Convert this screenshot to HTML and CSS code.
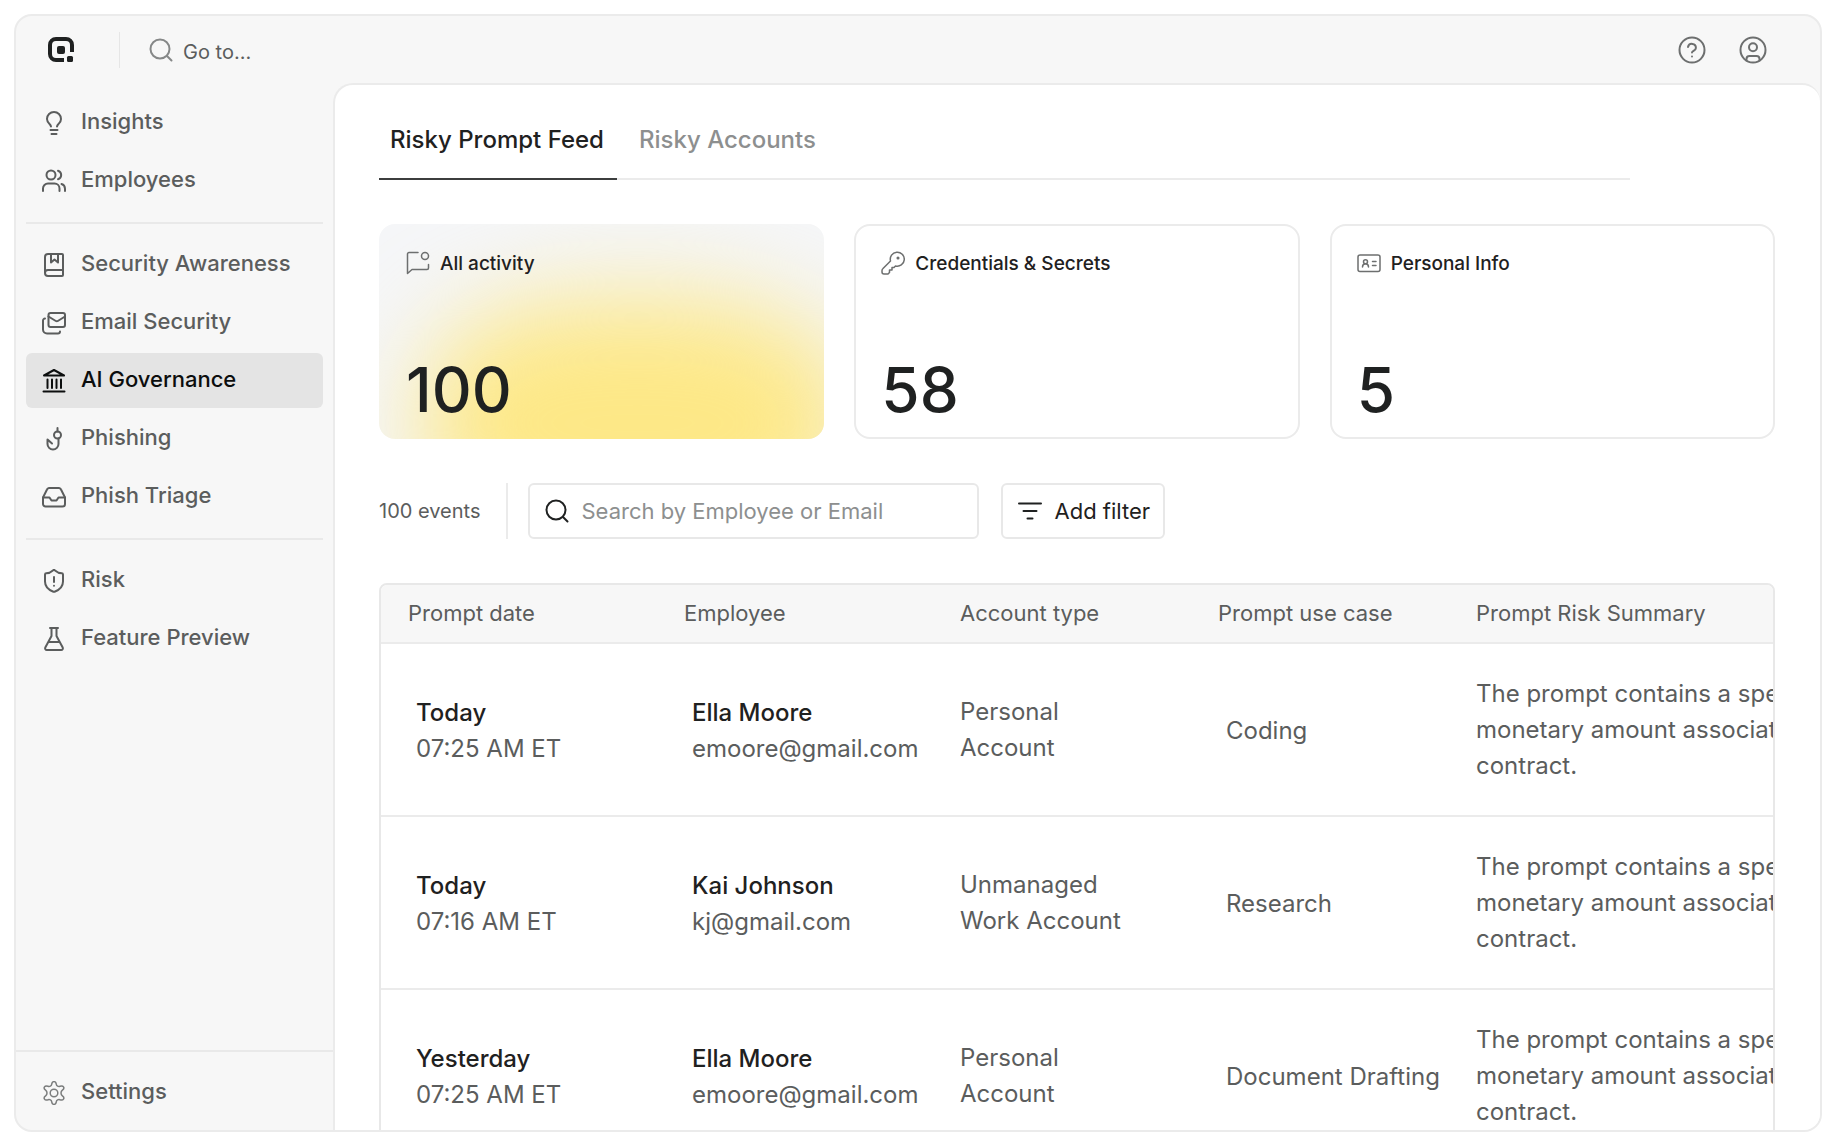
FILE: index.html
```html
<!DOCTYPE html>
<html lang="en">
<head>
  <meta charset="UTF-8" />
  <meta name="viewport" content="width=device-width, initial-scale=1" />
  <title>AI Governance - Risky Prompt Feed</title>
  <link rel="stylesheet" href="styles.css">
</head>
<body>
<div class="app">
  <header class="topbar">
    <a href="#" class="logo" aria-label="Home">
      <svg width="26" height="26" viewBox="0 0 26 26" fill="none">
        <path d="M16 23H8a6 6 0 0 1-6-6V8a6 6 0 0 1 6-6h10a6 6 0 0 1 6 6v7" stroke="#1f2121" stroke-width="4"/>
        <rect x="9" y="9" width="8" height="8" rx="2" fill="#1f2121"/>
        <rect x="19" y="19" width="6" height="6" rx="1.5" fill="#1f2121"/>
      </svg>
    </a>
    <label class="goto">
      <svg class="icon" viewBox="0 0 24 24"><circle cx="11" cy="11" r="9.5"/><path d="m18 18 4.5 4.5"/></svg>
      <input type="text" placeholder="Go to..." aria-label="Go to" />
    </label>
    <div class="top-actions">
      <button type="button" aria-label="Help">
        <svg class="icon" viewBox="0 0 28 28"><circle cx="14" cy="14" r="12.5"/><path d="M10 11a4 4 0 0 1 7.900 1c0 2.600-3.900 3-3.900 4.500"/><path d="M14 20.400v.1"/></svg>
      </button>
      <button type="button" aria-label="Account">
        <svg class="icon" viewBox="0 0 28 28"><circle cx="14" cy="14" r="12.500"/><circle cx="14" cy="11.300" r="4"/><path d="M7.500 24.500v-1.500a3 3 0 0 1 3-3h7a3 3 0 0 1 3 3v1.500"/></svg>
      </button>
    </div>
  </header>

  <aside class="sidebar">
    <nav>
      <ul>
        <li><a href="#"><svg class="icon" viewBox="0 0 24 24"><path d="M9 15.500c-.2-1-.7-1.700-1.500-2.500A6.800 6.800 0 0 1 5 8a7 7 0 0 1 14 0c0 2-.8 3.700-2.500 5-.8.8-1.300 1.500-1.500 2.500"/><path d="M8.500 19h7M9.500 23h5"/></svg>Insights</a></li>
        <li><a href="#"><svg class="icon" viewBox="0 0 24 24"><circle cx="9" cy="6" r="4.500"/><path d="M1 22v-2.500a5 5 0 0 1 5-5h6.500a5 5 0 0 1 5 5V22M16 1.700a4.500 4.500 0 0 1 0 8.600M19.500 15a5 5 0 0 1 3.500 4.700V22"/></svg>Employees</a></li>
      </ul>
      <ul>
        <li><a href="#"><svg class="icon" viewBox="0 0 24 24"><path d="M3 20V4a3 3 0 0 1 3-3h14a1 1 0 0 1 1 1v20a1 1 0 0 1-1 1H6a3 3 0 0 1 0-6h15"/><path d="M9 1v8.500l3.500-3L16 9.500V1"/></svg>Security Awareness</a></li>
        <li><a href="#"><svg class="icon" viewBox="0 0 24 24"><rect x="6.500" y="2" width="16.500" height="14" rx="2"/><path d="m6.500 5.500 7.300 4.500a2 2 0 0 0 2 0L23 5.500M18 20.500a2 2 0 0 1-2 2H5a4 4 0 0 1-4-4V9.500a2 2 0 0 1 2-2"/></svg>Email Security</a></li>
        <li><a href="#" class="active"><svg class="icon" viewBox="0 0 24 24"><path d="M1.500 22.500h21M5.500 19v-8.500M10 19v-8.500M14.500 19v-8.500M19 19v-8.500"/><path d="M12 1 22 6.500H2z"/></svg>AI Governance</a></li>
        <li><a href="#"><svg class="icon" viewBox="0 0 24 24"><circle cx="15.500" cy="8" r="3.500"/><path d="M15.500 4.500V1M16.500 11.500v5.500a5.500 5.500 0 0 1-11 0v-4.500l4.500 4"/></svg>Phishing</a></li>
        <li><a href="#"><svg class="icon" viewBox="0 0 24 24"><path d="M23 12.500h-6.500l-2 3h-5l-2-3H1"/><path d="M5 4.500 1 12.500v6.500a2.500 2.500 0 0 0 2.500 2.500h17A2.500 2.500 0 0 0 23 19v-6.500L19 4.500A2.500 2.500 0 0 0 17 3H7a2.500 2.500 0 0 0-2 1.500z"/></svg>Phish Triage</a></li>
      </ul>
      <ul>
        <li><a href="#"><svg class="icon" viewBox="0 0 24 24"><path d="M21 12.500c0 5.500-3.800 8.500-8.400 10.200a1.500 1.500 0 0 1-1.200 0C6.800 21 3 18 3 12.500V5.500a1.300 1.300 0 0 1 1.200-1.200c2.300 0 4.800-1.200 6.700-2.900a1.500 1.500 0 0 1 2.100 0c2 1.700 4.500 2.900 6.800 2.900A1.300 1.300 0 0 1 21 5.500z"/><path d="M12 8v5M12 16.700v.1"/></svg>Risk</a></li>
        <li><a href="#"><svg class="icon" viewBox="0 0 24 24"><path d="M8 1h8M9.500 1v8L3.300 20.500a1.700 1.700 0 0 0 1.500 2.500h14.400a1.700 1.700 0 0 0 1.500-2.500L14.500 9V1M6.500 15h11"/></svg>Feature Preview</a></li>
      </ul>
    </nav>
    <div class="settings">
      <a href="#"><svg class="icon thin" viewBox="0 0 24 24"><path d="M9.700 3.200C10 1.200 11 .6 12 .6s2 .6 2.300 2.600a2.600 2.600 0 0 0 3.700 2.100c1.900-.8 2.900-.3 3.500.6s.5 2.100-1.100 3.300a3.500 3.500 0 0 0 0 5.600c1.600 1.200 1.700 2.400 1.100 3.300s-1.600 1.400-3.500.6a2.600 2.600 0 0 0-3.700 2.100c-.3 2-1.300 2.600-2.300 2.600s-2-.6-2.300-2.600A2.600 2.600 0 0 0 6 18.700c-1.900.8-2.900.3-3.500-.6s-.5-2.100 1.100-3.300a3.500 3.500 0 0 0 0-5.600C2 8 1.900 6.800 2.500 5.900S4.100 4.500 6 5.300a2.600 2.600 0 0 0 3.700-2.100z"/><circle cx="12" cy="12" r="3.800"/></svg>Settings</a>
    </div>
  </aside>

  <main class="panel">
    <div class="tabs" role="tablist">
      <button type="button" role="tab" class="selected" aria-selected="true">Risky Prompt Feed</button>
      <button type="button" role="tab" aria-selected="false">Risky Accounts</button>
    </div>

    <div class="cards">
      <button type="button" class="card highlight">
        <span class="card-title"><svg class="icon thin" viewBox="0 0 24 24"><path d="M12 1.500H3a1.500 1.500 0 0 0-1.500 1.500v19.500l4.500-4h15a1.500 1.500 0 0 0 1.500-1.500v-3.500"/><circle cx="19" cy="5" r="3.500"/></svg>All activity</span>
        <span class="card-number">100</span>
      </button>
      <button type="button" class="card">
        <span class="card-title"><svg class="icon thin" viewBox="0 0 24 24"><path d="M2 17.500 9.500 10a7 7 0 1 1 5 5l-1.500 1.500h-2v2.500H8.500v2.500L7 23H3a2 2 0 0 1-2-2v-1a3 3 0 0 1 1-2.500z"/><circle cx="17" cy="7" r=".8"/></svg>Credentials &amp; Secrets</span>
        <span class="card-number">58</span>
      </button>
      <button type="button" class="card">
        <span class="card-title"><svg class="icon thin" viewBox="0 0 24 24"><rect x="1" y="4" width="22" height="16.500" rx="2"/><circle cx="8.500" cy="10.700" r="2"/><path d="M5.500 16c0-2 1.200-3.300 3-3.300s3 1.300 3 3.300M15.500 10.500H19M15.500 14.500H19"/></svg>Personal Info</span>
        <span class="card-number">5</span>
      </button>
    </div>

    <div class="toolbar">
      <span class="count">100 events</span>
      <label class="search">
        <svg class="icon" viewBox="0 0 24 24"><circle cx="11" cy="11" r="9.500"/><path d="m18 18 4.500 4.500"/></svg>
        <input type="text" placeholder="Search by Employee or Email" aria-label="Search by Employee or Email" />
      </label>
      <button type="button" class="filter">
        <svg class="icon" viewBox="0 0 24 24"><path d="M1 4.500h22M5.500 12h13M9.500 19.500h5"/></svg>
        Add filter
      </button>
    </div>

    <div class="table-wrap">
      <table>
        <colgroup>
          <col class="col-date"><col class="col-employee"><col class="col-type"><col class="col-case"><col class="col-summary">
        </colgroup>
        <thead>
          <tr>
            <th>Prompt date</th>
            <th>Employee</th>
            <th>Account type</th>
            <th>Prompt use case</th>
            <th>Prompt Risk Summary</th>
          </tr>
        </thead>
        <tbody>
          <tr>
            <td class="inset"><strong>Today</strong>07:25 AM ET</td>
            <td class="inset"><strong>Ella Moore</strong>emoore@gmail.com</td>
            <td class="type">Personal Account</td>
            <td class="inset">Coding</td>
            <td>The prompt contains a specific monetary amount associated with a contract.</td>
          </tr>
          <tr>
            <td class="inset"><strong>Today</strong>07:16 AM ET</td>
            <td class="inset"><strong>Kai Johnson</strong>kj@gmail.com</td>
            <td class="type">Unmanaged Work Account</td>
            <td class="inset">Research</td>
            <td>The prompt contains a specific monetary amount associated with a contract.</td>
          </tr>
          <tr>
            <td class="inset"><strong>Yesterday</strong>07:25 AM ET</td>
            <td class="inset"><strong>Ella Moore</strong>emoore@gmail.com</td>
            <td class="type">Personal Account</td>
            <td class="inset">Document Drafting</td>
            <td>The prompt contains a specific monetary amount associated with a contract.</td>
          </tr>
        </tbody>
      </table>
    </div>
  </main>
</div>
</body>
</html>
```
FILE: styles.css
```css
* {
  box-sizing: border-box;
}
body {
  font-family: Inter, "Liberation Sans", sans-serif;
  background: #fff;
  color: #5b5d5d;
  margin: 0;
}
a {
  color: inherit;
  text-decoration: none;
}
button,
input {
  font: inherit;
  color: inherit;
  background: none;
  border: none;
  padding: 0;
}
button {
  cursor: pointer;
}
.icon {
  width: 24px;
  height: 24px;
  flex: none;
  fill: none;
  stroke: currentColor;
  stroke-width: 2;
  stroke-linecap: round;
  stroke-linejoin: round;
}
.thin {
  stroke-width: 1.5;
}

.app {
  display: grid;
  grid-template-columns: 317px 1fr;
  grid-template-rows: 67px 1fr;
  height: calc(100vh - 28px);
  margin: 14px;
  background: #f7f7f7;
  border: 2px solid #ebebeb;
  border-radius: 18px;
  overflow: hidden;
}

/* top bar */
.topbar {
  grid-column: 1 / 3;
  display: flex;
  align-items: center;
  padding: 0 53px 0 32px;
}
.logo {
  display: flex;
  padding-right: 45px;
}
.goto {
  display: flex;
  align-items: center;
  gap: 10px;
  height: 36px;
  padding-left: 29px;
  border-left: 1px solid #e6e6e6;
  color: #868888;
}
.goto input {
  width: 200px;
  padding-top: 4px;
  font-size: 20px;
}
.goto input::placeholder {
  color: #5b5d5d;
  opacity: 1;
}
.top-actions {
  display: flex;
  gap: 33px;
  margin-left: auto;
  color: #6d6f6f;
}
.top-actions button {
  display: flex;
}
.top-actions .icon {
  width: 28px;
  height: 28px;
}

/* sidebar */
.sidebar {
  display: flex;
  flex-direction: column;
  font-size: 22px;
  font-weight: 500;
}
.sidebar nav {
  flex: 1;
  padding: 12px 10px 0;
}
.sidebar ul {
  display: flex;
  flex-direction: column;
  gap: 3px;
  list-style: none;
  margin: 0;
  padding: 0 0 14px;
}
.sidebar ul + ul {
  padding-top: 13px;
  border-top: 2px solid #e9e9e9;
}
.sidebar a {
  display: flex;
  align-items: center;
  gap: 15px;
  height: 55px;
  padding: 0 16px 4px;
  border-radius: 6px;
}
.sidebar .icon {
  margin-top: 5px;
}
.sidebar a.active {
  background: #e4e4e4;
  color: #0c0e0e;
}
.settings {
  padding: 13px 10px 10px;
  border-top: 2px solid #e9e9e9;
}
.settings .icon {
  color: #7b7d7d;
}

/* content */
.panel {
  display: flex;
  flex-direction: column;
  min-width: 0;
  min-height: 0;
  padding: 20px 45px 0 44px;
  background: #fff;
  border: 2px solid #ebebeb;
  border-width: 2px 0 0 2px;
  border-radius: 20px 18px 0 0;
  overflow: hidden;
}
.tabs {
  display: flex;
  flex: none;
  margin-right: 145px;
  border-bottom: 2px solid #ebebeb;
  font-size: 24px;
  font-weight: 500;
}
.tabs button {
  height: 75px;
  margin-bottom: -2px;
  padding: 0 10px 5px;
  color: #8d8f8f;
  border-bottom: 2px solid transparent;
}
.tabs .selected {
  padding: 0 13px 5px 11px;
  margin-right: 12px;
  color: #1f2121;
  border-bottom-color: #3c3e3e;
}

.cards {
  display: grid;
  flex: none;
  grid-template-columns: repeat(3, 1fr);
  gap: 30px;
  margin-top: 44px;
}
.card {
  display: flex;
  flex-direction: column;
  justify-content: space-between;
  height: 215px;
  padding: 25px;
  border: 2px solid #ebebeb;
  border-radius: 16px;
  color: #1f2121;
  text-align: left;
}
.card.highlight {
  position: relative;
  isolation: isolate;
  padding: 27px;
  border: none;
  background: #f5f6f8;
  overflow: hidden;
}
/* soft glow behind the text */
.card.highlight::before {
  content: "";
  position: absolute;
  z-index: -1;
  inset: 35% -6% -50% 10%;
  background: #fde887;
  border-radius: 40%;
  filter: blur(48px);
}
.card-title {
  display: flex;
  align-items: center;
  gap: 10px;
  font-size: 19px;
  font-weight: 500;
}
.card-title .icon {
  color: #6d6f6f;
}
.card-number {
  font-size: 62px;
  font-weight: 500;
  line-height: 44px;
}

.toolbar {
  display: flex;
  flex: none;
  align-items: stretch;
  height: 56px;
  margin-top: 44px;
}
.count {
  display: flex;
  align-items: center;
  padding-right: 25px;
  margin-right: 20px;
  border-right: 2px solid #ebebeb;
  font-size: 20px;
}
.search,
.filter {
  display: flex;
  align-items: center;
  gap: 13px;
  padding: 0 13px 0 15px;
  border: 2px solid #e8e8e8;
  border-radius: 6px;
  color: #1f2121;
  font-size: 22px;
}
.search {
  width: 451px;
  margin-right: 22px;
}
.search input {
  flex: 1;
  min-width: 0;
}
.search input::placeholder {
  color: #8d8f8f;
  opacity: 1;
}

.table-wrap {
  flex: 1 0 auto;
  margin-top: 44px;
  border: 2px solid #e8e8e8;
  border-radius: 8px 8px 0 0;
  overflow: hidden;
}
table {
  width: 1540px;
  table-layout: fixed;
  border-collapse: collapse;
}
.col-date,
.col-employee {
  width: 276px;
}
.col-type,
.col-case {
  width: 258px;
}
th {
  height: 58px;
  padding: 0 0 2px 27px;
  background: #f7f7f7;
  font-size: 22px;
  font-weight: 400;
  text-align: left;
}
td {
  height: 173px;
  padding: 0 0 0 27px;
  border-top: 2px solid #ebebeb;
  font-size: 24px;
  line-height: 36px;
}
td.inset {
  padding: 2px 0 0 35px;
}
td.type {
  padding-right: 50px;
}
td strong {
  display: block;
  color: #1f2121;
  font-weight: 500;
}
```
